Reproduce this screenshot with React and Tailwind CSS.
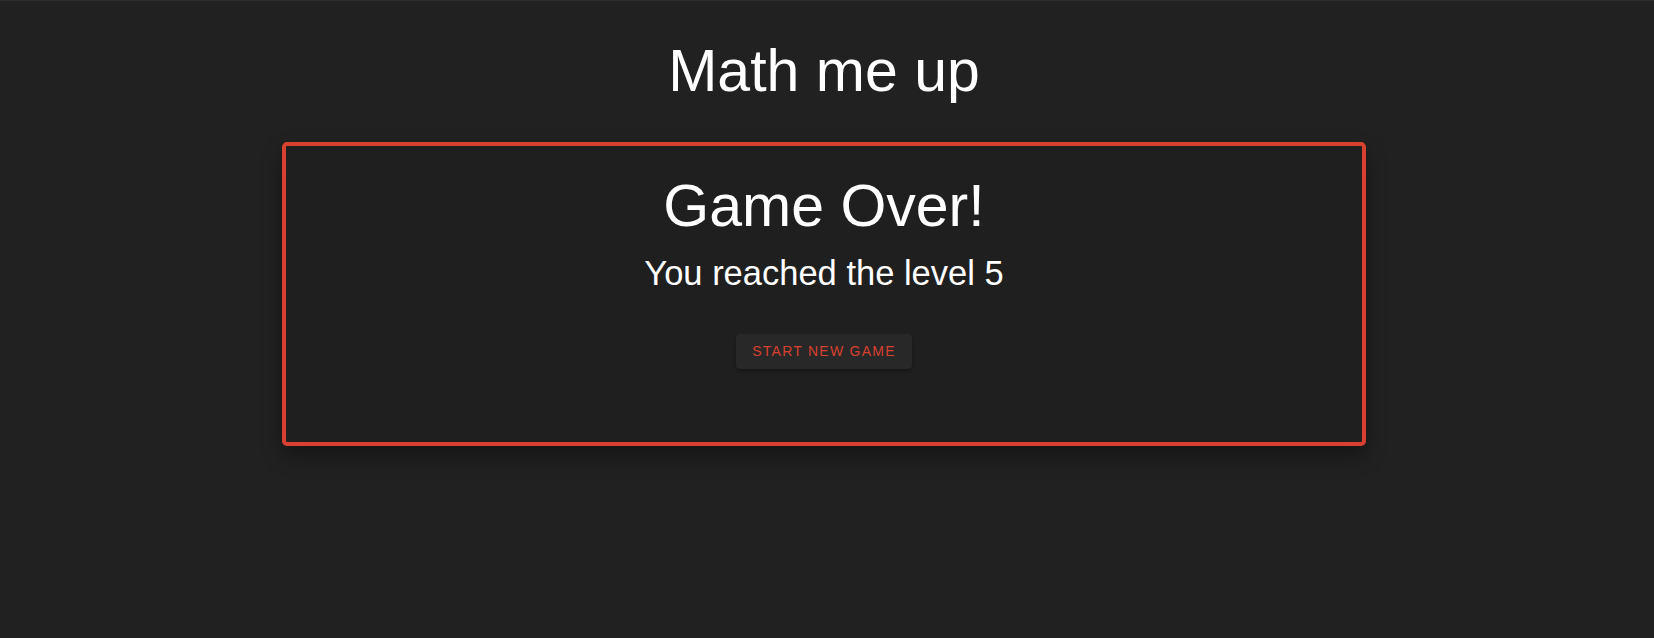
export default function App() {
  const level = 5;

  return (
    <div
      className="min-h-[638px] w-full bg-[#212121] border-t border-[#2e2e2e] flex flex-col items-center pr-[6px] text-white"
      style={{ fontFamily: '"Liberation Sans", Arial, sans-serif' }}
    >
      <h1 className="mt-[34px] text-[59px] leading-[72px] font-normal">Math me up</h1>

      <div className="mt-[35px] w-[1084px] h-[304px] rounded-[5px] border-4 border-[#d8402f] bg-[#1f1f1f] shadow-[0_10px_20px_rgba(0,0,0,0.35)] flex flex-col items-center pt-[24px]">
        <h2 className="text-[59px] leading-[72px] font-normal">Game Over!</h2>
        <p className="mt-[10px] text-[34.5px] leading-[42px]">You reached the level {level}</p>
        <button className="mt-[40px] h-[35px] px-4 rounded bg-[#282828] text-[#d8402f] text-[14px] uppercase tracking-[1.25px] shadow-[0_2px_3px_rgba(0,0,0,0.3)]">
          Start new game
        </button>
      </div>
    </div>
  );
}
